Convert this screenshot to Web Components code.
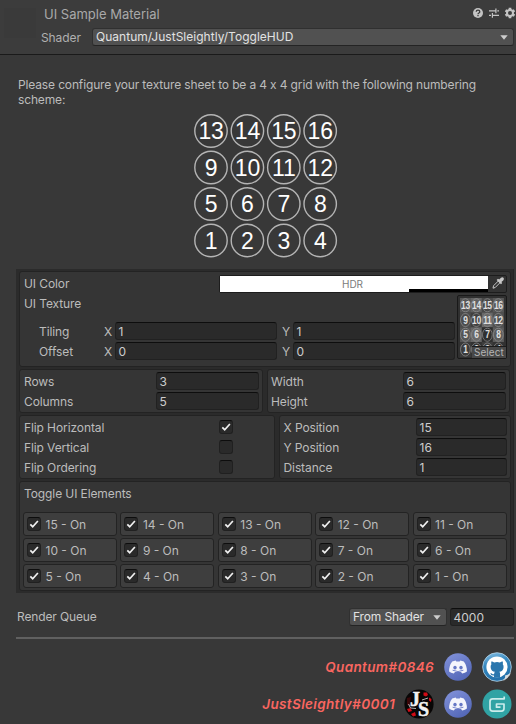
<!DOCTYPE html>
<html lang="en">
<head>
<meta charset="utf-8">
<title>UI Sample Material</title>
<style>
  html, body { margin: 0; height: 100%; background: #383838; overflow: hidden; }
  body { font: 12px/20px Inter, "Liberation Sans", sans-serif; letter-spacing: -0.1px; color: #bcbcbc; }
</style>
</head>
<body>
<material-inspector></material-inspector>
<script>
const define = (name, render) => customElements.define(name, class extends HTMLElement {
  connectedCallback() {
    if (this.shadowRoot) return;
    this.attachShadow({ mode: 'open' }).innerHTML = render(this);
  }
});

/* Text input: <u-field value w> */
define('u-field', el => `
  <style>
    :host { display: block; box-sizing: border-box; width: ${el.getAttribute('w')}px; height: 18px; flex: none;
      background: #2a2a2a; border: 1px solid #212121; border-top-color: #0d0d0d; border-radius: 3px;
      padding-left: 2.5px; line-height: 17px; color: #cdcdcd; letter-spacing: 0; }
  </style>${el.getAttribute('value')}`);

/* Checkbox: <u-check on> */
define('u-check', el => `
  <style>
    :host { display: block; box-sizing: border-box; width: 14px; height: 14px; flex: none;
      background: #2a2a2a; border: 1px solid #202020; border-top-color: #0d0d0d; border-radius: 3px; }
    svg { display: block; }
  </style>${el.hasAttribute('on') ? '<svg width="12" height="12" viewBox="0 0 12 12"><path d="M2.3 6.3 4.7 8.7 9.9 3" fill="none" stroke="#f0f0f0" stroke-width="1.7"/></svg>' : ''}`);

/* Drop-down button: <u-dropdown w> */
define('u-dropdown', el => `
  <style>
    :host { display: flex; box-sizing: border-box; width: ${el.getAttribute('w')}px; height: 18px; flex: none;
      align-items: center; justify-content: space-between; background: #515151; border: 1px solid #303030;
      border-bottom-color: #242424; border-radius: 3px; padding: 0 5px 0 3px; line-height: 16px; color: #e2e2e2; }
    svg { display: block; }
  </style><slot></slot><svg width="8" height="5" viewBox="0 0 8 5"><path d="M0.3 0.3h7.4L4 4.8z" fill="#cdcdcd"/></svg>`);

/* Rounded box that groups rows */
define('u-group', el => `
  <style>
    :host { display: block; box-sizing: border-box; background: #353535; border: 1px solid #232323; border-radius: 3px; }
  </style><slot></slot>`);

/* Label on the left, control on the right */
define('u-row', el => `
  <style>
    :host { display: flex; height: 20px; align-items: center; justify-content: space-between; }
    span { white-space: nowrap; padding-top: var(--label-drop, 0px); }
  </style><span>${el.getAttribute('label')}</span><slot></slot>`);

/* Tiling / offset row with X and Y inputs */
define('u-vector', el => `
  <style>
    :host { display: grid; grid-template-columns: 65px 11px 162px 5px 11px 162px; grid-template-rows: 20px; height: 20px; align-items: center; }
    span { line-height: 18px; padding-top: 2px; }
    .y { grid-column: 5; }
  </style>
  <span>${el.getAttribute('label')}</span><span>X</span><u-field w="162" value="${el.getAttribute('value')}"></u-field>
  <span class="y">Y</span><u-field w="162" value="${el.getAttribute('value')}"></u-field>`);

/* 4 x 4 sheet of circled numbers, counted from the bottom row up */
define('number-sheet', el => {
  const lit = el.hasAttribute('thumb');
  let s = '';
  for (let r = 0; r < 4; r++) for (let c = 0; c < 4; c++) {
    const n = (3 - r) * 4 + c + 1, x = 18 + c * 36.4, y = 18 + r * 36.5;
    if (lit) {
      const g = ['#565656', '#626262', '#484848', '#585858', '#4c4c4c', '#404040', '#686868', '#505050',
                 '#565656', '#686868', '#2f2f2f', '#5c5c5c', '#3b3b3b', '#333', '#3e3e3e', '#333'][r * 4 + c];
      s += `<rect x="${x - 18.5}" y="${y - 18.5}" width="37" height="37" fill="${g}"/>`;
    }
    s += `<circle cx="${x}" cy="${y}" r="16.2" fill="none" stroke="${lit ? '#929292' : '#b4b4b4'}" stroke-width="${lit ? 2 : 1.4}"/>
      <text x="${x}" y="${y + (lit ? 9 : 8.1)}" text-anchor="middle">${n}</text>`;
  }
  return `<style>
      :host { display: block; }
      svg { display: block; width: 100%; height: 100%; }
      text { font: ${lit ? 'bold 28px' : '23px'} "Liberation Sans", Arial, sans-serif; fill: ${lit ? '#e0e0e0' : '#fff'}; letter-spacing: ${lit ? '-1px' : '-.2px'}; }
    </style><svg viewBox="0 0 146 146" preserveAspectRatio="none">${s}</svg>`;
});

/* HDR colour swatch with eyedropper */
define('color-field', () => `
  <style>
    :host { display: flex; box-sizing: border-box; width: 288px; height: 18px; border: 1px solid #1d1d1d; border-radius: 2px; background: #333; }
    .swatch { box-sizing: border-box; width: 268px; padding-right: 3px; background: #fff; color: #7b7b7b; font-size: 10px; line-height: 16px; text-align: center; letter-spacing: -.1px;
      background-image: linear-gradient(#000, #000); background-size: 79px 3px; background-position: right bottom; background-repeat: no-repeat; }
    svg { display: block; margin: 0 0 0 3px; }
  </style>
  <div class="swatch">HDR</div>
  <svg width="14" height="14" viewBox="0 0 14 14"><path d="M2 12.2 2.5 9.8 7.3 5 9 6.7 4.2 11.5z" fill="none" stroke="#c8c8c8" stroke-width="1"/><path d="M5.6 4 7 2.8 8.2 3.6 10 1.7Q11.6 .8 12.7 2.1 13.3 3.4 12.2 4.5L10.4 6 11.2 7 10 8.2z" fill="#c8c8c8"/></svg>`);

/* Texture preview with Select button */
define('texture-slot', () => `
  <style>
    :host { display: block; position: relative; box-sizing: border-box; width: 50px; height: 64px; background: #303030; border: 1px solid #191919; border-radius: 2px; padding: 2px; }
    number-sheet { width: 44px; height: 59px; }
    span { position: absolute; right: 0; bottom: 0; background: #484848; border-top: 1px solid #1c1c1c; box-sizing: border-box; height: 12px; width: 34px;
      text-align: right; padding-right: 2px; font-size: 10px; line-height: 10px; letter-spacing: .1px; color: #b4b4b4; }
  </style><number-sheet thumb></number-sheet><span>Select</span>`);

/* Element toggle button */
define('toggle-button', el => `
  <style>
    :host { display: flex; box-sizing: border-box; height: 24px; align-items: center; gap: 4.5px; background: #3e3e3e; border: 1px solid #232323; border-radius: 3px; padding-left: 3px; letter-spacing: 0; }
    span { padding-top: 1px; white-space: pre; }
  </style><u-check on></u-check><span>${el.getAttribute('n')} - On</span>`);

define('header-bar', () => `
  <style>
    :host { display: flex; box-sizing: border-box; height: 55px; background: #3c3c3c; border-bottom: 1px solid #1a1a1a; padding-left: 4px; }
    .thumb { width: 32px; height: 30px; margin-top: 8px; background: #3a3a3a; }
    .main { flex: 1; }
    .top { display: flex; justify-content: space-between; height: 28px; padding-left: 8px; }
    h1 { margin: 0; padding-top: 4px; font: 400 13px/20px Inter, sans-serif; letter-spacing: 0; color: #a9a9a9; }
    .icons { display: flex; gap: 4px; padding-top: 7px; }
    .shader { display: flex; padding: 0 0 0 5px; line-height: 20px; }
    .shader span { width: 51px; color: #b0b0b0; }
    u-dropdown { letter-spacing: 0.02px; }
  </style>
  <div class="thumb"></div>
  <div class="main">
    <div class="top"><h1>UI Sample Material</h1>
      <div class="icons">
        <svg width="12" height="12" viewBox="0 0 12 12"><circle cx="6" cy="6" r="5" fill="#c4c4c4"/><path d="M4.2 4.8Q4.3 3.1 6 3.1 7.8 3.1 7.8 4.7 7.8 5.5 6.9 6 6 6.5 6 7.2M6 8v1.3" fill="none" stroke="#3a3a3a" stroke-width="1.3"/></svg>
        <svg width="12" height="12" viewBox="0 0 12 12"><path d="M1 3.8h6.4M9.3 3.8H11M7.9 1.4v4.8M1 8.4h2M5 8.4h6M4.4 6v4.8" fill="none" stroke="#c4c4c4" stroke-width="1.2"/></svg>
        <svg width="12" height="12" viewBox="0 0 12 12"><path d="M6 .8v10.4M1.5 3.4l9 5.2M1.5 8.6l9-5.2" stroke="#c4c4c4" stroke-width="2.7"/><circle cx="6" cy="6" r="3" fill="#3c3c3c" stroke="#c4c4c4" stroke-width="2"/></svg>
      </div></div>
    <div class="shader"><span>Shader</span><u-dropdown w="422">Quantum/JustSleightly/ToggleHUD</u-dropdown></div>
  </div>`);

const icons = {
  discord: `<svg width="28" height="28" viewBox="0 0 28 28"><defs><linearGradient id="d" x2="0.6" y2="1"><stop offset="0" stop-color="#8494dc"/><stop offset="1" stop-color="#5468b8"/></linearGradient></defs>
    <circle cx="14" cy="14" r="13.8" fill="url(#d)"/>
    <path d="M8.2 8.6Q10 7.6 11.7 7.4L12.3 8.5H15.7L16.3 7.4Q18 7.6 19.8 8.6 23 12.8 22.9 18.4 21.2 19.9 18.2 20.6L17 18.9H11L9.8 20.6Q6.8 19.9 5.1 18.4 5 12.8 8.2 8.6z" fill="#f4f5fc"/>
    <ellipse cx="11" cy="14.6" rx="1.7" ry="1.9" fill="#6577c5"/><ellipse cx="17" cy="14.6" rx="1.7" ry="1.9" fill="#6577c5"/><path d="M8.6 17.2Q14 20 19.4 17.2" fill="none" stroke="#7686cc" stroke-width="1"/></svg>`,
  github: `<svg width="30" height="30" viewBox="0 0 30 30"><defs><linearGradient id="g" x2="0.3" y2="1"><stop offset="0" stop-color="#8cc3e6"/><stop offset=".45" stop-color="#3487bf"/><stop offset="1" stop-color="#2371ab"/></linearGradient></defs>
    <circle cx="15" cy="15" r="14.3" fill="url(#g)" stroke="#b7d7ea" stroke-width=".8"/>
    <circle cx="15" cy="15" r="10.6" fill="#fff"/>
    <path d="M9.6 9.2 12.3 10.4Q15 9.8 17.8 10.4L20.5 9.2Q21.3 10.8 20.8 12.2 21.9 13.6 21.5 15.9 20.8 19.3 17.3 19.8 18.2 20.7 18.1 22.3V25.8H12V23.5Q9.2 24 8.2 21.6 9.4 20.9 10.4 22 11.2 22.7 12.1 22 12.2 20.6 12.9 19.8 9.4 19.3 8.7 15.9 8.3 13.6 9.4 12.2 8.8 10.8 9.6 9.2z" fill="#2a76ad"/>
    <path d="M29 20.5Q27 26.5 21 29.2 23.7 26.5 23 23.4 26.8 23.4 29 20.5z" fill="#d9dde0"/></svg>`,
  js: `<svg width="30" height="30" viewBox="0 0 30 30"><circle cx="15" cy="15" r="14.6" fill="#080606"/>
    <path d="M19.5 3.5h3.5l1 2.5-2 1.5-2.5-1zM3 20l3.5-1 1.5 3-3.5 1zM7 25l4-2 1 3.5-3 1zM25 8.5l2.5 1.5-.5 3-2-1.5z" fill="#d40b15"/><path d="M3 9l4-1-1 5 1 4-4-1z" fill="#390709"/>
    <text x="6" y="16.5">J</text><text x="14" y="27">S</text><path d="M4.5 15 6.5 19 12 19.5M18 11 24 9" stroke="#ddd" stroke-width=".8" fill="none"/></svg>`,
  gumroad: `<svg width="30" height="30" viewBox="0 0 30 30"><circle cx="15" cy="15" r="14.5" fill="#30a3a4"/>
    <path d="M22.2 7.5v2.3H10.6Q8 9.8 8 12.4v7.2Q8 22.2 10.6 22.2h8.8Q22 22.2 22 19.6V15h-7.5v3.2h4" fill="none" stroke="#caeceb" stroke-width="1.7" stroke-linejoin="round"/></svg>`
};

/* Credit line: name, then round link icons */
define('credit-line', el => `
  <style>
    :host { display: flex; height: 37px; align-items: center; justify-content: flex-end; }
    .name { font: italic 600 13.5px/20px Inter, sans-serif; letter-spacing: .36px; color: #fa6660; margin-right: 8.5px; padding-top: 1px; }
    .icon { display: flex; width: 30px; height: 30px; align-items: center; justify-content: center; }
    .icon + .icon { margin-left: 9px; }
    svg { display: block; overflow: visible; }
    text { font: bold 20px "Liberation Serif", serif; letter-spacing: 0; fill: #f2f2f2; stroke: #f2f2f2; stroke-width: .5px; }
  </style><span class="name">${el.getAttribute('name')}</span>${el.getAttribute('icons').split(' ').map(i => `<span class="icon">${icons[i]}</span>`).join('')}`);

define('material-inspector', () => `
  <style>
    :host { display: block; width: 516px; height: 724px; background: #383838; }
    p { margin: 0; padding: 22px 20px 0 18px; line-height: 15px; letter-spacing: -.14px; }
    .sheet { width: 146px; height: 146px; margin: 6px 0 0 192.5px; }
    .box { box-sizing: border-box; margin: 10px 0 0 16px; width: 498px; height: 324px; background: #2b2b2b; border-right: 1px solid #252525;
      padding: 2px 2px 2px 3px; display: flex; flex-direction: column; gap: 2px; }
    .tex { height: 96px; padding: 2px 3px 0 4px; }
    .texrow { display: flex; justify-content: space-between; }
    .vecs { padding-left: 15px; margin-top: 7px; }
    .left { width: 431px; }
    texture-slot { margin-top: 1px; }
    .pair { display: flex; gap: 4px; --label-drop: 2px; }
    .rc { height: 44px; padding: 1px 3px 0 4px; }
    .flip { height: 64px; padding: 1px 3px 0 4px; }
    .toggles { height: 110px; padding: 2px 3px; }
    .title { padding-left: 1px; height: 28px; }
    .grid { display: grid; grid-template-columns: repeat(5, 94px); column-gap: 3.4px; row-gap: 2px; }
    .queue { display: flex; height: 20px; margin-top: 14px; padding: 0 2px 0 17px; align-items: center; }
    .queue span { flex: 1; letter-spacing: -.13px; }
    .queue u-dropdown { letter-spacing: -.15px; }
    .queue u-field { margin-left: 3px; }
    hr { border: 0; height: 2px; margin: 10px 2px 9px 16px; background: #606060; }
    .credits { padding-right: 4.5px; }
  </style>
  <header-bar></header-bar>
  <p>Please configure your texture sheet to be a 4 x 4 grid with the following numbering scheme:</p>
  <number-sheet class="sheet"></number-sheet>
  <div class="box">
    <u-group class="tex">
      <u-row label="UI Color"><color-field></color-field></u-row>
      <div class="texrow">
        <div class="left"><u-row label="UI Texture"></u-row>
          <div class="vecs"><u-vector label="Tiling" value="1"></u-vector><u-vector label="Offset" value="0"></u-vector></div></div>
        <texture-slot></texture-slot>
      </div>
    </u-group>
    <div class="pair">
      <u-group class="rc" style="width:244px"><u-row label="Rows"><u-field w="103" value="3"></u-field></u-row><u-row label="Columns"><u-field w="103" value="5"></u-field></u-row></u-group>
      <u-group class="rc" style="width:243px;padding-left:3px"><u-row label="Width"><u-field w="103" value="6"></u-field></u-row><u-row label="Height"><u-field w="103" value="6"></u-field></u-row></u-group>
    </div>
    <div class="pair">
      <u-group class="flip" style="width:256px;padding-right:41px"><u-row label="Flip Horizontal"><u-check on></u-check></u-row><u-row label="Flip Vertical"><u-check></u-check></u-row><u-row label="Flip Ordering"><u-check></u-check></u-row></u-group>
      <u-group class="flip" style="width:233px"><u-row label="X Position"><u-field w="91" value="15"></u-field></u-row><u-row label="Y Position"><u-field w="91" value="16"></u-field></u-row><u-row label="Distance"><u-field w="91" value="1"></u-field></u-row></u-group>
    </div>
    <u-group class="toggles">
      <div class="title">Toggle UI Elements</div>
      <div class="grid">${[15,14,13,12,11,10,9,8,7,6,5,4,3,2,1].map(n => `<toggle-button n="${n}"></toggle-button>`).join('')}</div>
    </u-group>
  </div>
  <div class="queue"><span>Render Queue</span><u-dropdown w="98">From Shader</u-dropdown><u-field w="64" value="4000"></u-field></div>
  <hr>
  <div class="credits">
    <credit-line name="Quantum#0846" icons="discord github"></credit-line>
    <credit-line name="JustSleightly#0001" icons="js discord gumroad"></credit-line>
  </div>`);
</script>
</body>
</html>
